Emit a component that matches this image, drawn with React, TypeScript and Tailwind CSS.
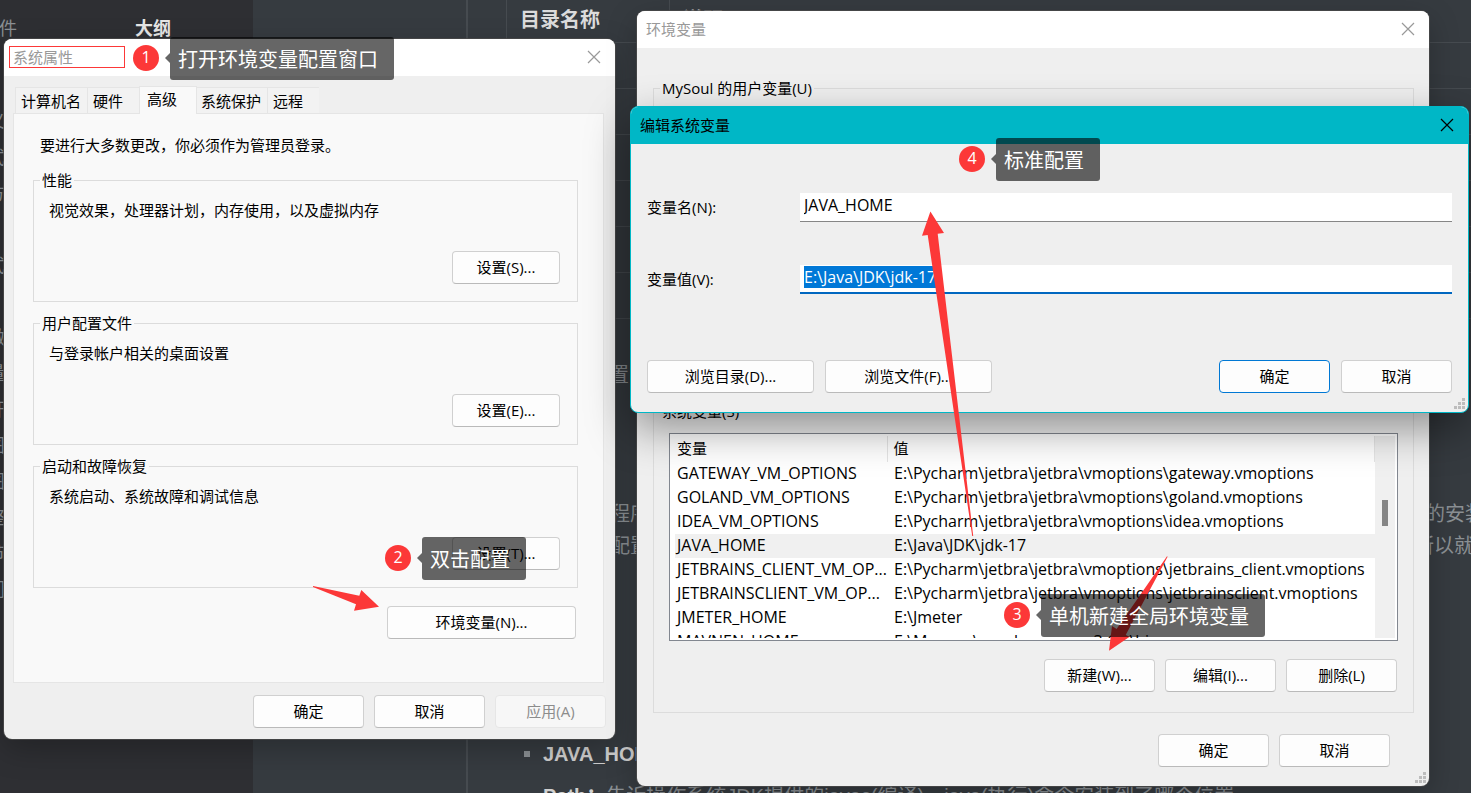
import { useEffect, useRef } from "react";
import clsx from "clsx";

const systemVariables = [
  ["GATEWAY_VM_OPTIONS", "E:\\Pycharm\\jetbra\\jetbra\\vmoptions\\gateway.vmoptions"],
  ["GOLAND_VM_OPTIONS", "E:\\Pycharm\\jetbra\\jetbra\\vmoptions\\goland.vmoptions"],
  ["IDEA_VM_OPTIONS", "E:\\Pycharm\\jetbra\\jetbra\\vmoptions\\idea.vmoptions"],
  ["JAVA_HOME", "E:\\Java\\JDK\\jdk-17"],
  [
    "JETBRAINS_CLIENT_VM_OP...",
    "E:\\Pycharm\\jetbra\\jetbra\\vmoptions\\jetbrains_client.vmoptions",
  ],
  [
    "JETBRAINSCLIENT_VM_OP...",
    "E:\\Pycharm\\jetbra\\jetbra\\vmoptions\\jetbrainsclient.vmoptions",
  ],
  ["JMETER_HOME", "E:\\Jmeter"],
  ["MAVNEN_HOME", "E:\\Mavnen\\apache-maven-3.6.1\\bin"],
];

const sidebarItems = ["义", "式", "方", "0", "式", "1", "做", "量", "开", "图", "图", "整", "节", "们"];

const Button = (props: {
  children: React.ReactNode;
  className?: string;
  disabled?: boolean;
  primary?: boolean;
}): JSX.Element => {
  return (
    <button
      disabled={props.disabled}
      className={clsx(
        "h-[33px] shrink-0 rounded border pb-[2px] text-center text-[15px] leading-5",
        props.disabled
          ? "border-[#e6e6e6] bg-[#f7f7f7] text-[#8c8c8c]"
          : "bg-[#fdfdfd] text-black",
        !props.disabled &&
          (props.primary ? "border-[#0078d4]" : "border-[#d0d0d0] border-b-[#bababa]"),
        props.className ?? "w-[111px]"
      )}
    >
      {props.children}
    </button>
  );
};

const CloseButton = (): JSX.Element => {
  return (
    <button aria-label="关闭" className="p-1">
      <svg width="14" height="14" viewBox="0 0 14 14" fill="none" stroke="currentColor">
        <path d="M1 1L13 13M13 1L1 13" strokeWidth="1.2" />
      </svg>
    </button>
  );
};

const ResizeGrip = (): JSX.Element => {
  return (
    <svg
      width="12"
      height="12"
      fill="#bdbdbd"
      className="absolute right-[2px] bottom-[2px]"
      aria-hidden="true"
    >
      <path d="M8 0h3v3h-3zM4 4h3v3h-3zM8 4h3v3h-3zM0 8h3v3h-3zM4 8h3v3h-3zM8 8h3v3h-3z" />
    </svg>
  );
};

const SettingsGroup = (props: {
  title: string;
  text: string;
  button: string;
}): JSX.Element => {
  return (
    <fieldset className="h-[132px] border border-[#dcdcdc] pr-[17px] pl-[15px]">
      <legend className="-ml-[9px] px-0.5">{props.title}</legend>
      <p className="mt-[10px]">{props.text}</p>
      <div className="mt-[31px] flex justify-end">
        <Button className="w-[108px]">{props.button}</Button>
      </div>
    </fieldset>
  );
};

const Tab = (props: { children: React.ReactNode; className: string }): JSX.Element => {
  return (
    <button
      role="tab"
      className={clsx(
        "h-[26px] border border-r-0 border-b-0 border-[#e5e5e5] bg-[#f2f2f2] text-left",
        props.className
      )}
    >
      {props.children}
    </button>
  );
};

const SystemProperties = (): JSX.Element => {
  return (
    <section className="absolute top-[39px] left-[4px] w-[611px] overflow-hidden rounded-lg bg-[#efefef] shadow-[0_0_0_1px_#4a4a4acc,0_10px_30px_#00000040]">
      <header className="flex h-[37px] items-center justify-between bg-white pr-[10px] pb-[2px] pl-[5px] text-[#999999]">
        <h2 className="h-[22px] w-[116px] border border-[#fc3838] pl-[3px]">系统属性</h2>
        <CloseButton />
      </header>
      <div className="pt-[10px] pr-[11px] pb-[11px] pl-[9px]">
        <div role="tablist" className="flex h-[27px] items-end pl-[2px]">
          <Tab className="w-[72px] pl-[5px]">计算机名</Tab>
          <Tab className="w-[52px] pl-[5px]">硬件</Tab>
          <button
            role="tab"
            aria-selected="true"
            className="relative -mb-px h-[28px] w-[58px] self-start border border-b-0 border-[#e5e5e5] bg-[#f9f9f9] pb-1 pl-[7px] text-left"
          >
            高级
          </button>
          <Tab className="w-[70px] border-l-0 pl-1">系统保护</Tab>
          <Tab className="w-[52px] border-r pl-[5px]">远程</Tab>
        </div>
        <div className="border border-[#e5e5e5] bg-[#f9f9f9] pt-[21px] pr-[25px] pb-[43px] pl-[19px]">
          <p className="ml-[7px]">要进行大多数更改，你必须作为管理员登录。</p>
          <div className="mt-[15px] flex flex-col gap-[11px]">
            <SettingsGroup
              title="性能"
              text="视觉效果，处理器计划，内存使用，以及虚拟内存"
              button="设置(S)..."
            />
            <SettingsGroup
              title="用户配置文件"
              text="与登录帐户相关的桌面设置"
              button="设置(E)..."
            />
            <SettingsGroup
              title="启动和故障恢复"
              text="系统启动、系统故障和调试信息"
              button="设置(T)..."
            />
          </div>
          <div className="mt-[18px] mr-0.5 flex justify-end">
            <Button className="w-[189px]">环境变量(N)...</Button>
          </div>
        </div>
        <div className="mt-3 -mr-[2px] flex justify-end gap-[10px]">
          <Button>确定</Button>
          <Button>取消</Button>
          <Button disabled>应用(A)</Button>
        </div>
      </div>
    </section>
  );
};

const EnvironmentVariables = (): JSX.Element => {
  return (
    <section className="absolute top-[11px] left-[637px] w-[792px] overflow-hidden rounded-lg bg-[#efefef] shadow-[0_0_0_1px_#4a4a4acc,0_10px_30px_#00000040]">
      <header className="flex h-[37px] items-center justify-between bg-white pr-[10px] pb-[2px] pl-[9px] text-[#999999]">
        <h2>环境变量</h2>
        <CloseButton />
      </header>
      <div className="flex flex-col gap-[11px] pt-[30px] pr-[15px] pb-[19px] pl-[16px]">
        <fieldset className="h-[312px] border border-[#dcdcdc]">
          <legend className="ml-[6px] px-0.5">MySoul 的用户变量(U)</legend>
        </fieldset>
        <fieldset className="h-[312px] border border-[#dcdcdc] px-[15px]">
          <legend className="-ml-[9px] px-0.5">系统变量(S)</legend>
          <div className="mt-[12px] flex h-[208px] overflow-hidden border border-[#828790] bg-white p-[2px]">
            <div className="min-w-0 flex-1 overflow-hidden pl-[3px]">
              <table className="w-full table-fixed border-collapse">
                <thead>
                  <tr className="h-[26px]">
                    <th className="w-[212px] border-r border-[#e5e5e5] pb-[2px] pl-[2px] text-left font-normal">
                      变量
                    </th>
                    <th className="border-r border-[#e5e5e5] pb-[2px] pl-[6px] text-left font-normal">
                      值
                    </th>
                  </tr>
                </thead>
                <tbody className="text-base leading-[22px]">
                  {systemVariables.map(([name, value]) => (
                    <tr key={name} className={clsx("h-6", name === "JAVA_HOME" && "bg-[#f0f0f0]")}>
                      <td className="p-0 pb-[2px] pl-[2px] whitespace-nowrap">{name}</td>
                      <td className="p-0 pb-[2px] pl-[7px] whitespace-nowrap">{value}</td>
                    </tr>
                  ))}
                </tbody>
              </table>
            </div>
            <div className="w-[20px] bg-[#f0f0f0] pt-[64px]">
              <div className="mx-auto h-[26px] w-[6px] bg-[#858585]" />
            </div>
          </div>
          <div className="mt-[18px] mr-px flex justify-end gap-[10px]">
            <Button>新建(W)...</Button>
            <Button>编辑(I)...</Button>
            <Button>删除(L)</Button>
          </div>
        </fieldset>
        <div className="mt-[10px] mr-[24px] flex justify-end gap-[10px]">
          <Button>确定</Button>
          <Button>取消</Button>
        </div>
      </div>
      <ResizeGrip />
    </section>
  );
};

const EditVariable = (): JSX.Element => {
  const valueRef = useRef<HTMLInputElement>(null);

  // the dialog opens with the value ready to be replaced
  useEffect(() => {
    valueRef.current?.focus();
    valueRef.current?.select();
  }, []);

  return (
    <section className="absolute top-[106px] left-[630px] w-[839px] overflow-hidden rounded-lg border border-[#00b7c6] bg-[#efefef] shadow-[0_16px_44px_#00000066]">
      <header className="flex h-[37px] items-center justify-between bg-[#00b7c6] pr-[10px] pb-[2px] pl-[9px]">
        <h2>编辑系统变量</h2>
        <CloseButton />
      </header>
      <div className="px-4 pt-[49px] pb-[19px]">
        <div className="flex items-center">
          <label htmlFor="name" className="w-[153px] pb-[2px]">
            变量名(N):
          </label>
          <input
            id="name"
            defaultValue="JAVA_HOME"
            className="h-[29px] flex-1 border-b border-[#868686] bg-white px-1 pb-[5px] text-base leading-5 outline-none"
          />
        </div>
        <div className="mt-[43px] flex items-center">
          <label htmlFor="value" className="w-[153px] pb-[2px]">
            变量值(V):
          </label>
          <input
            id="value"
            ref={valueRef}
            defaultValue="E:\Java\JDK\jdk-17"
            className="h-[29px] flex-1 border-b-2 border-[#0067c0] bg-white px-1 pb-[4px] text-base leading-5 outline-none selection:bg-[#0078d7] selection:text-white"
          />
        </div>
        <div className="mt-[66px] flex gap-[11px]">
          <Button className="w-[167px]">浏览目录(D)...</Button>
          <Button className="w-[167px]">浏览文件(F)...</Button>
          <div className="flex-1" />
          <Button primary>确定</Button>
          <Button>取消</Button>
        </div>
      </div>
      <ResizeGrip />
    </section>
  );
};

const Callout = (props: {
  step: number;
  className: string;
  children: React.ReactNode;
}): JSX.Element => {
  return (
    <div className={clsx("absolute flex items-center text-white", props.className)}>
      <span className="mb-[2px] flex size-[26px] items-center justify-center rounded-full bg-[#fc3838] pb-[2px] text-base leading-5">
        {props.step}
      </span>
      <svg width="5" height="10" className="mb-[2px] ml-[6px] fill-black/60" aria-hidden="true">
        <path d="M5 0L0 5L5 10z" />
      </svg>
      <span className="rounded-[3px] bg-black/60 pt-2 pr-4 pb-[6px] pl-2 text-xl leading-[29px] whitespace-nowrap">
        {props.children}
      </span>
    </div>
  );
};

const NotesBackground = (): JSX.Element => {
  return (
    <div className="flex h-full text-xl leading-8 text-[#8b9094]">
      <aside className="w-[253px] shrink-0 overflow-hidden bg-[#2e2f33] text-lg">
        <div className="flex h-[103px] pt-[12px] leading-8">
          <span className="-ml-px w-[136px]">件</span>
          <span className="font-bold text-[#e6e6e6]">大纲</span>
        </div>
        <ul className="-ml-[13px] leading-9">
          {sidebarItems.map((item, i) => (
            <li key={i}>{item}</li>
          ))}
        </ul>
      </aside>
      <div className="w-[215px] shrink-0 border-r-2 border-[#464b50]" />
      <main className="min-w-0 flex-1 pl-[38px] font-['Liberation_Sans','Noto_Sans_CJK_SC',sans-serif]">
        <table className="w-full table-fixed border-collapse border-l border-[#464b50]">
          <thead>
            <tr className="h-[42px] border-b border-[#464b50] text-left text-[#dcdcdc]">
              <th className="w-[163px] border-r border-[#464b50] pb-[2px] pl-[13px] leading-[34px]">
                目录名称
              </th>
              <th className="pb-[2px] pl-[13px] leading-[34px]">说明</th>
            </tr>
          </thead>
          <tbody>
            {[1, 2, 3, 4, 5, 6].map((row) => (
              <tr key={row} className="h-[46px] border-b border-[#464b50]">
                <td className="border-r border-[#464b50]" />
                <td />
              </tr>
            ))}
          </tbody>
        </table>
        <p className="mt-[40px] pl-[103px]">置</p>
        <p className="mt-[107px] flex justify-between pl-[104px]">
          <span>程序</span>
          <span className="-mr-[14px]">的安装</span>
        </p>
        <p className="flex justify-between pl-[104px]">
          <span>配置</span>
          <span className="-mr-[3px]">所以就</span>
        </p>
        <ul className="mt-[176px] flex flex-col gap-[10px] pl-[18px] whitespace-nowrap">
          <li className="flex items-center gap-[13px]">
            <span className="size-[6px] bg-[#8b9094]" />
            <b className="text-[#d0d0d0]">JAVA_HOME</b>
          </li>
          <li className="pl-[19px]">
            <b className="text-[#d0d0d0]">Path：</b>
            告诉操作系统JDK提供的javac(编译)、java(执行)命令安装到了哪个位置
          </li>
        </ul>
      </main>
    </div>
  );
};

function App() {
  return (
    <div className="relative h-screen overflow-hidden bg-[#363b40] font-['Open_Sans','Noto_Sans_CJK_SC',sans-serif] text-[15px] leading-5 text-black">
      <NotesBackground />
      <SystemProperties />
      <EnvironmentVariables />
      <EditVariable />

      <svg width="66" height="25" className="absolute top-[586px] left-[313px]" fill="#fc3838">
        <path d="M0 0L46.3 9.7L48.3 4L66 20.7L41 24.7L43 18.3L0 1z" />
      </svg>
      <svg width="52" height="325" className="absolute top-[211px] left-[922px]" fill="#fc3838">
        <path d="M8.4 0.6L22 22L15.7 22.7L51.2 325L50.2 325L5.7 24L0 24.7z" />
      </svg>
      <svg width="59" height="95" className="absolute top-[556px] left-[1109px]" fill="#fc3838">
        <path d="M58.6 0.8L16.7 79L20.7 80.7L0 94.7L3 70L7.6 73L58 0.2z" />
      </svg>

      <Callout step={1} className="top-[37px] left-[133px]">
        打开环境变量配置窗口
      </Callout>
      <Callout step={2} className="top-[537px] left-[385px]">
        双击配置
      </Callout>
      <Callout step={3} className="top-[594px] left-[1004px]">
        单机新建全局环境变量
      </Callout>
      <Callout step={4} className="top-[138px] left-[959px]">
        标准配置
      </Callout>
    </div>
  );
}

export default App;
